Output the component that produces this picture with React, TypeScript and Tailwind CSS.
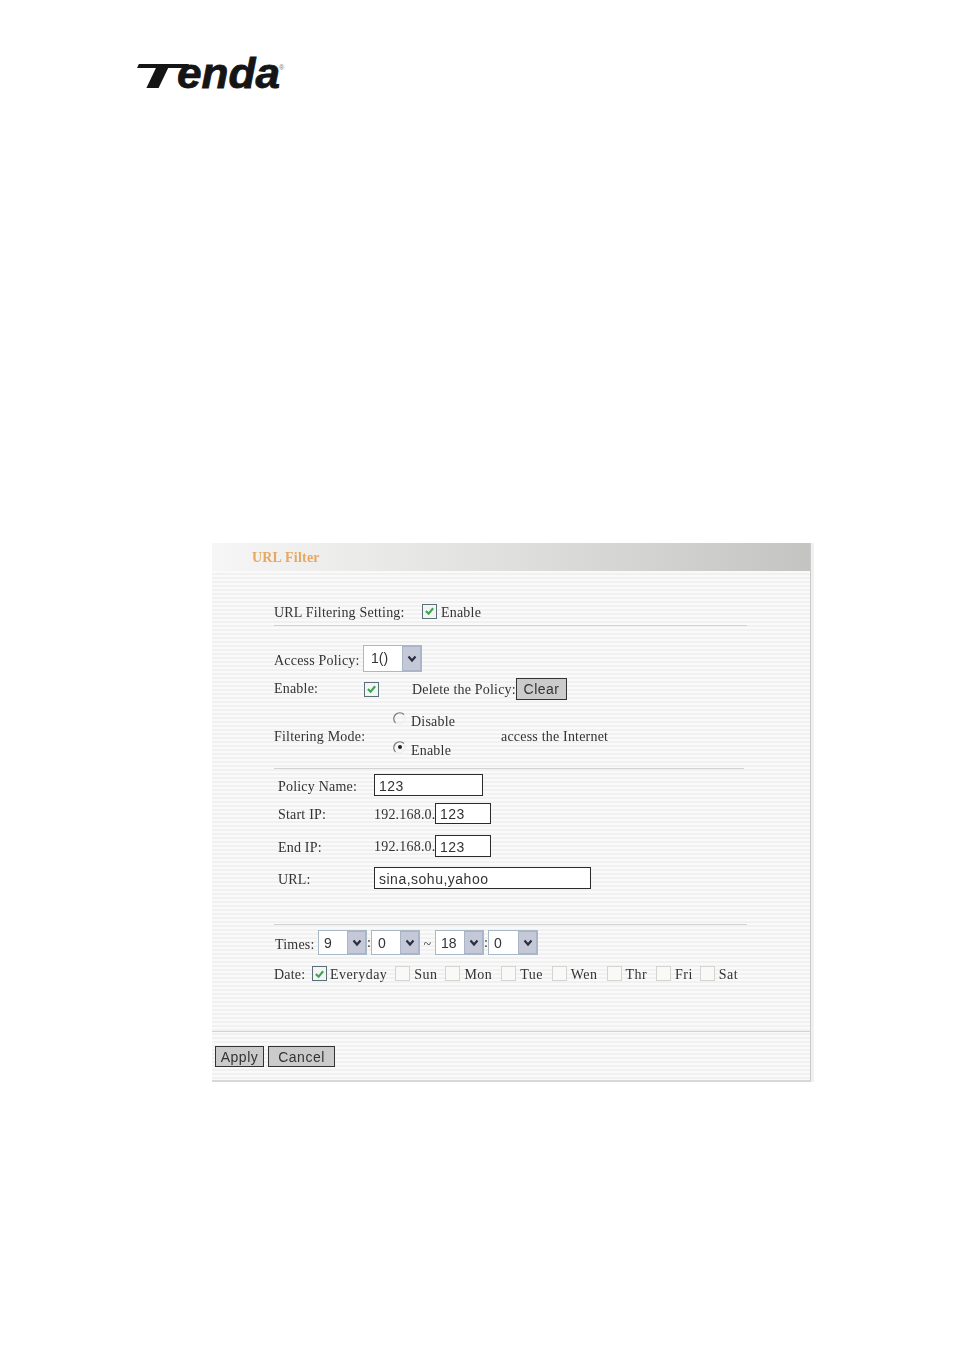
const serifBase = "font-['Liberation_Serif',serif] text-[14px] text-[#333] leading-none whitespace-nowrap"
const serif = `${serifBase} tracking-[0.2px]`
const serifWide = `${serifBase} tracking-[0.45px]`
const sans = "font-['Liberation_Sans',sans-serif] text-[14px] text-[#333]"

function Check({ checked = false, className = "" }: { checked?: boolean; className?: string }) {
  return (
    <span
      className={
        checked
          ? `flex w-[15px] h-[15px] shrink-0 items-center justify-center border border-[#5a6f78] bg-[#f4f4f4] ${className}`
          : `block w-[15px] h-[15px] shrink-0 border border-[#d4d4d0] bg-[#f9f9f7] ${className}`
      }
    >
      {checked && (
        <svg width="11" height="10" viewBox="0 0 12 11" fill="none">
          <path d="M2 5.5 5 8.5 10 2.5" stroke="#3fa554" strokeWidth="2.4" />
        </svg>
      )}
    </span>
  )
}

function Radio({ checked = false }: { checked?: boolean }) {
  return (
    <svg width="14" height="14" viewBox="0 0 14 14" fill="none" className="shrink-0">
      <path d="M2.5 11A6 6 0 0 1 11 2.5" stroke="#777" strokeWidth="1.2" />
      <path d="M11.5 3.5A6 6 0 0 1 3.5 11.5" stroke="#ececec" strokeWidth="1" />
      {checked && <circle cx="7" cy="6" r="2" fill="#222" />}
    </svg>
  )
}

function Select({ value, width, height = "h-[25px]", pad = "pl-[5px]" }: { value: string; width: string; height?: string; pad?: string }) {
  return (
    <div className={`flex ${width} ${height} shrink-0 border border-[#a9b8c6] bg-white`}>
      <span className={`${sans} flex-1 ${pad} leading-[24px]`}>{value}</span>
      <span className="flex w-[19px] items-center justify-center border border-[#a9b4c8] bg-[#c5c8d6]">
        <svg width="10" height="8" viewBox="0 0 10 8" fill="none">
          <path d="M1.5 1.5 5 5.5 8.5 1.5" stroke="#2c2c44" strokeWidth="2.2" />
        </svg>
      </span>
    </div>
  )
}

function Field({ value, width, height }: { value: string; width: string; height: string }) {
  return (
    <input
      readOnly
      value={value}
      className={`${sans} ${width} ${height} shrink-0 border border-[#2b2b2b] bg-white pl-[4px] pt-[1px] tracking-[0.5px] outline-none`}
    />
  )
}

function Btn({ label, width, height }: { label: string; width: string; height: string }) {
  return (
    <button className={`${sans} ${width} ${height} shrink-0 border border-[#333] bg-[#cbcbcb] text-center leading-none tracking-[0.5px]`}>
      {label}
    </button>
  )
}

const days = [
  { label: "Sun", ml: "ml-[8px]" },
  { label: "Mon", ml: "ml-[8px]" },
  { label: "Tue", ml: "ml-[9px]" },
  { label: "Wen", ml: "ml-[9px]" },
  { label: "Thr", ml: "ml-[9px]" },
  { label: "Fri", ml: "ml-[9px]" },
  { label: "Sat", ml: "ml-[7px]" },
]

export default function App() {
  return (
    <div className="w-[954px] h-[1350px] bg-white overflow-hidden">
      {/* logo */}
      <div className="pl-[136px] pt-[50px] h-[543px]">
        <svg width="152" height="44" viewBox="0 0 152 44" className="overflow-visible">
          <text
            x="-5"
            y="38"
            textLength="52"
            lengthAdjust="spacingAndGlyphs"
            fontFamily="Liberation Sans"
            fontWeight="700"
            fontStyle="italic"
            fontSize="35"
            fill="#151515"
          >
            T
          </text>
          <text
            x="41"
            y="38"
            textLength="103"
            lengthAdjust="spacingAndGlyphs"
            fontFamily="Liberation Sans"
            fontWeight="700"
            fontStyle="italic"
            fontSize="42"
            fill="#151515"
            stroke="#151515"
            strokeWidth="0.8"
          >
            enda
          </text>
          <text x="143" y="20" fontFamily="Liberation Sans" fontSize="7" fill="#777">
            ®
          </text>
        </svg>
      </div>

      {/* panel */}
      <div className="ml-[212px] w-[599px] h-[539px] border-r border-r-[#c9c9c9] border-b-[2px] border-b-[#d8d8d8] shadow-[3px_0_0_#f1f1f1] blur-[0.3px] bg-[repeating-linear-gradient(180deg,#fafafa_0px,#fafafa_2px,#f1f1f1_2px,#f1f1f1_4px)]">
        <div className="flex h-[28px] items-center bg-gradient-to-r from-[#f6f6f6] via-[#dfdfdd] to-[#c4c4c2] pl-[40px]">
          <span className="font-['Liberation_Serif',serif] text-[14px] font-bold tracking-[0.2px] text-[#e9a761] leading-none pt-[2px]">URL Filter</span>
        </div>

        <div className="pl-[62px]">
          <div className="mt-[27px] flex h-[28px] w-[473px] items-center border-b border-[#d2d2d0] pb-[1px]">
            <span className={`${serif} w-[148px] pt-[3px]`}>URL Filtering Setting:</span>
            <Check checked />
            <span className={`${serif} ml-[4px] pt-[3px]`}>Enable</span>
          </div>

          <div className="mt-[19px] flex h-[27px] items-center">
            <span className={`${serif} w-[89px] pt-[4px]`}>Access Policy:</span>
            <Select value="1()" width="w-[59px]" height="h-[27px]" pad="pl-[7px]" />
          </div>

          <div className="mt-[6px] flex h-[22px] items-center">
            <span className={`${serif} w-[90px]`}>Enable:</span>
            <Check checked />
            <span className={`${serif} ml-[33px] w-[104px] pt-[1px]`}>Delete the Policy:</span>
            <Btn label="Clear" width="w-[51px]" height="h-[22px]" />
          </div>

          <div className="mt-[10px] flex h-[52px] items-center">
            <span className={`${serif} w-[119px] pt-[2px]`}>Filtering Mode:</span>
            <div className="flex h-full w-[108px] flex-col pt-[2px]">
              <div className="flex gap-[4px]">
                <Radio />
                <span className={`${serif} pt-[3px]`}>Disable</span>
              </div>
              <div className="mt-[12px] flex gap-[4px]">
                <Radio checked />
                <span className={`${serif} pt-[3px]`}>Enable</span>
              </div>
            </div>
            <span className={`${serif} pt-[2px]`}>access the Internet</span>
          </div>

          <div className="mt-[6px] h-px w-[470px] bg-[#d2d2d0]" />

          <div className="pl-[4px]">
            <div className="mt-[5px] flex h-[22px] items-center">
              <span className={`${serif} w-[96px] pt-[3px]`}>Policy Name:</span>
              <Field value="123" width="w-[109px]" height="h-[22px]" />
            </div>
            <div className="mt-[7px] flex h-[21px] items-center">
              <span className={`${serif} w-[96px] pt-[3px]`}>Start IP:</span>
              <span className={`${serif} w-[61px] pt-[2px]`}>192.168.0.</span>
              <Field value="123" width="w-[56px]" height="h-[21px]" />
            </div>
            <div className="mt-[11px] flex h-[22px] items-center">
              <span className={`${serif} w-[96px] pt-[3px]`}>End IP:</span>
              <span className={`${serif} w-[61px] pt-[2px]`}>192.168.0.</span>
              <Field value="123" width="w-[56px]" height="h-[22px]" />
            </div>
            <div className="mt-[10px] flex h-[22px] items-center">
              <span className={`${serif} w-[96px] pt-[3px]`}>URL:</span>
              <Field value="sina,sohu,yahoo" width="w-[217px]" height="h-[22px]" />
            </div>
          </div>

          <div className="mt-[35px] h-px w-[473px] bg-[#d2d2d0]" />

          <div className="mt-[5px] flex h-[25px] items-center">
            <span className={`${serif} w-[44px] pt-[5px] pl-[1px]`}>Times:</span>
            <Select value="9" width="w-[49px]" />
            <span className={`${serif} w-[4px]`}>:</span>
            <Select value="0" width="w-[49px]" pad="pl-[6px]" />
            <span className={`${serif} w-[15px] pt-[5px] text-center`}>~</span>
            <Select value="18" width="w-[49px]" />
            <span className={`${serif} w-[4px]`}>:</span>
            <Select value="0" width="w-[50px]" />
          </div>

          <div className="mt-[10px] flex h-[20px] items-center">
            <span className={`${serif} w-[38px]`}>Date:</span>
            <Check checked className="mb-[3px]" />
            <span className={`${serifWide} ml-[3px]`}>Everyday</span>
            {days.map((d) => (
              <div key={d.label} className={`flex items-center gap-[4px] ${d.ml}`}>
                <Check className="mb-[3px]" />
                <span className={serifWide}>{d.label}</span>
              </div>
            ))}
          </div>
        </div>

        <div className="mt-[46px] h-px w-full bg-[#d2d2d0]" />

        <div className="mt-[14px] flex gap-[4px] pl-[3px]">
          <Btn label="Apply" width="w-[49px]" height="h-[21px]" />
          <Btn label="Cancel" width="w-[67px]" height="h-[21px]" />
        </div>
      </div>
    </div>
  )
}
